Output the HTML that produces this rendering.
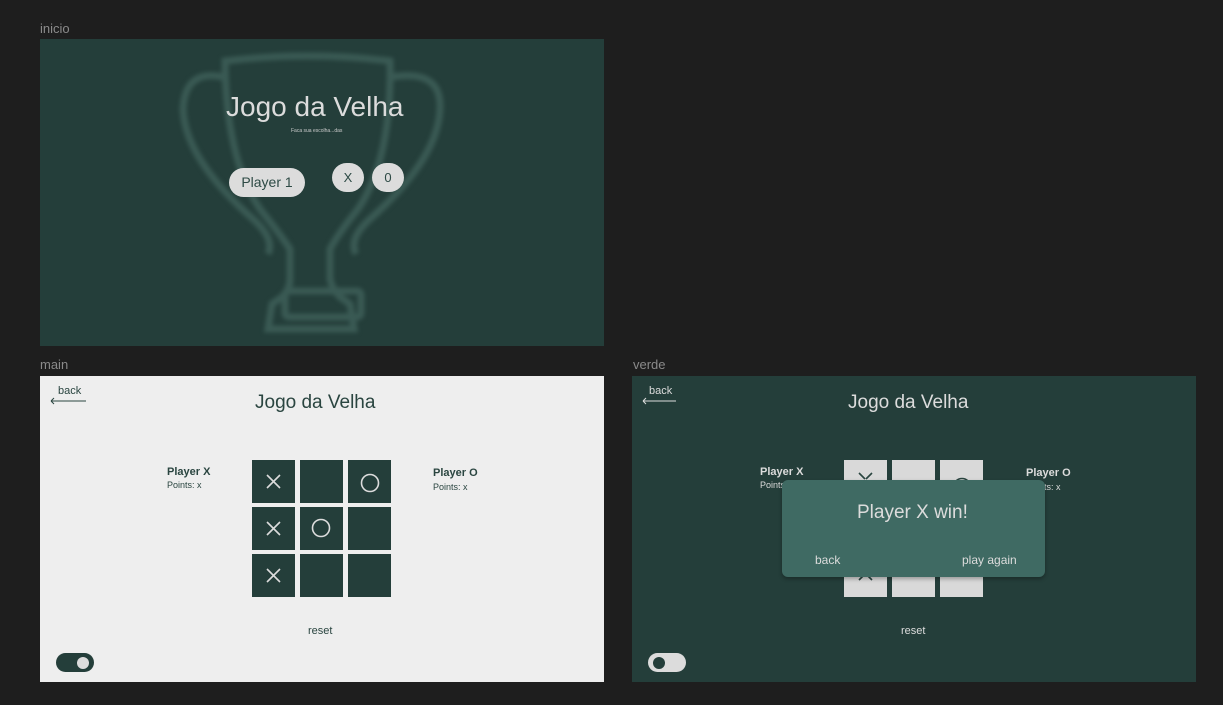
<!DOCTYPE html>
<html><head><meta charset="utf-8">
<style>
*{margin:0;padding:0;box-sizing:border-box}
body{width:1223px;height:705px;background:#1e1e1e;position:relative;overflow:hidden;font-family:"Liberation Sans",sans-serif}
.a{position:absolute}
.lbl{color:#8a8a8a;font-size:13px}
.frame{position:absolute;overflow:hidden}
.g{background:#243e3a}
.w{background:#eeeeee}
.cell{position:absolute;width:43px;height:43px}
.t{position:absolute;white-space:nowrap}
</style></head><body>
<div class="a lbl" style="left:40px;top:21px">inicio</div>
<div class="a lbl" style="left:40px;top:357px">main</div>
<div class="a lbl" style="left:633px;top:357px">verde</div>

<!-- inicio -->
<div class="frame g" style="left:40px;top:39px;width:564px;height:307px">
<svg class="a" style="left:0;top:0;filter:blur(2px)" width="564" height="307" viewBox="0 0 564 307" fill="none" stroke="#3a5a54" stroke-width="7">
<path d="M185 22 Q268 12 350 22 Q352 120 318 170 Q298 195 290 210 L290 240 Q292 250 300 258 L310 265 L314 290 L228 290 L232 265 L242 258 Q250 250 250 240 L250 210 Q240 195 220 170 Q186 120 185 22Z"/>
<path d="M183 38 Q145 30 143 70 Q145 120 213 180 Q235 200 228 215"/>
<path d="M352 38 Q402 30 400 70 Q398 120 330 180 Q308 200 316 215"/>
<rect x="245" y="252" width="76" height="26" rx="4"/>
</svg>
<div class="t" style="left:186px;top:52px;font-size:28px;color:#dcdcdc">Jogo da Velha</div>
<div class="t" style="left:251px;top:89px;font-size:5px;color:#ccc">Faca sua escolha...das</div>
<div class="a" style="left:189px;top:129px;width:76px;height:29px;border-radius:15px;background:#dcdcdc;color:#2d4a45;font-size:14px;line-height:29px;text-align:center">Player 1</div>
<div class="a" style="left:292px;top:124px;width:32px;height:29px;border-radius:15px;background:#dcdcdc;color:#2d4a45;font-size:13px;line-height:29px;text-align:center">X</div>
<div class="a" style="left:332px;top:124px;width:32px;height:29px;border-radius:15px;background:#dcdcdc;color:#2d4a45;font-size:13px;line-height:29px;text-align:center">0</div>
</div>

<!-- main -->
<div class="frame w" style="left:40px;top:376px;width:564px;height:306px;color:#2a4540">
<div class="t" style="left:18px;top:9px;font-size:11px">back</div>
<svg class="a" style="left:9px;top:20px" width="40" height="10"><path d="M2 5H37M2 5L5 2M2 5L5 8" stroke="#2a4540" stroke-width="1" fill="none"/></svg>
<div class="t" style="left:215px;top:16px;font-size:19px">Jogo da Velha</div>
<div class="t" style="left:127px;top:90px;font-size:11px;font-weight:bold">Player X</div>
<div class="t" style="left:127px;top:104px;font-size:9px">Points: x</div>
<div class="t" style="left:393px;top:91px;font-size:11px;font-weight:bold">Player O</div>
<div class="t" style="left:393px;top:106px;font-size:9px">Points: x</div>
<div class="cell" style="left:212px;top:84px;background:#243e3a"></div>
<div class="cell" style="left:260px;top:84px;background:#243e3a"></div>
<div class="cell" style="left:308px;top:84px;background:#243e3a"></div>
<div class="cell" style="left:212px;top:131px;background:#243e3a"></div>
<div class="cell" style="left:260px;top:131px;background:#243e3a"></div>
<div class="cell" style="left:308px;top:131px;background:#243e3a"></div>
<div class="cell" style="left:212px;top:178px;background:#243e3a"></div>
<div class="cell" style="left:260px;top:178px;background:#243e3a"></div>
<div class="cell" style="left:308px;top:178px;background:#243e3a"></div>
<svg class="a" style="left:0;top:0" width="564" height="306" stroke="#dcdcdc" stroke-width="1.6" fill="none">
<path d="M227 99L240 112M240 99L227 112"/>
<path d="M227 146L240 159M240 146L227 159"/>
<path d="M227 193L240 206M240 193L227 206"/>
<circle cx="330" cy="107" r="8.5"/>
<circle cx="281" cy="152" r="8.5"/>
</svg>
<div class="t" style="left:268px;top:249px;font-size:11px">reset</div>
<div class="a" style="left:16px;top:277px;width:38px;height:19px;border-radius:10px;background:#243e3a"></div>
<div class="a" style="left:37px;top:281px;width:12px;height:12px;border-radius:6px;background:#dcdcdc"></div>
</div>

<!-- verde -->
<div class="frame g" style="left:632px;top:376px;width:564px;height:306px;color:#dcdcdc">
<div class="t" style="left:17px;top:9px;font-size:11px">back</div>
<svg class="a" style="left:9px;top:20px" width="40" height="10"><path d="M2 5H35M2 5L5 2M2 5L5 8" stroke="#dcdcdc" stroke-width="1" fill="none"/></svg>
<div class="t" style="left:216px;top:16px;font-size:19px">Jogo da Velha</div>
<div class="t" style="left:128px;top:90px;font-size:11px;font-weight:bold">Player X</div>
<div class="t" style="left:128px;top:104px;font-size:9px">Points: x</div>
<div class="t" style="left:394px;top:91px;font-size:11px;font-weight:bold">Player O</div>
<div class="t" style="left:394px;top:106px;font-size:9px">Points: x</div>
<div class="cell" style="left:212px;top:84px;background:#d9d9d9"></div>
<div class="cell" style="left:260px;top:84px;background:#d9d9d9"></div>
<div class="cell" style="left:308px;top:84px;background:#d9d9d9"></div>
<div class="cell" style="left:212px;top:178px;background:#d9d9d9"></div>
<div class="cell" style="left:260px;top:178px;background:#d9d9d9"></div>
<div class="cell" style="left:308px;top:178px;background:#d9d9d9"></div>
<svg class="a" style="left:0;top:0" width="564" height="306" stroke="#2a4540" stroke-width="1.6" fill="none">
<path d="M227 97L233 103M240 97L234 103"/>
<path d="M227 204L233 198M240 204L234 198"/>
<circle cx="330" cy="111" r="8.5"/>
</svg>
<div class="a" style="left:150px;top:104px;width:263px;height:97px;border-radius:6px;background:#3f6a63;box-shadow:0 2px 4px rgba(0,0,0,.3)"></div>
<div class="t" style="left:225px;top:126px;font-size:19px">Player X win!</div>
<div class="t" style="left:183px;top:177px;font-size:12px">back</div>
<div class="t" style="left:330px;top:177px;font-size:12px">play again</div>
<div class="t" style="left:269px;top:249px;font-size:11px">reset</div>
<div class="a" style="left:16px;top:277px;width:38px;height:19px;border-radius:10px;background:#dcdcdc"></div>
<div class="a" style="left:21px;top:281px;width:12px;height:12px;border-radius:6px;background:#243e3a"></div>
</div>
</body></html>
